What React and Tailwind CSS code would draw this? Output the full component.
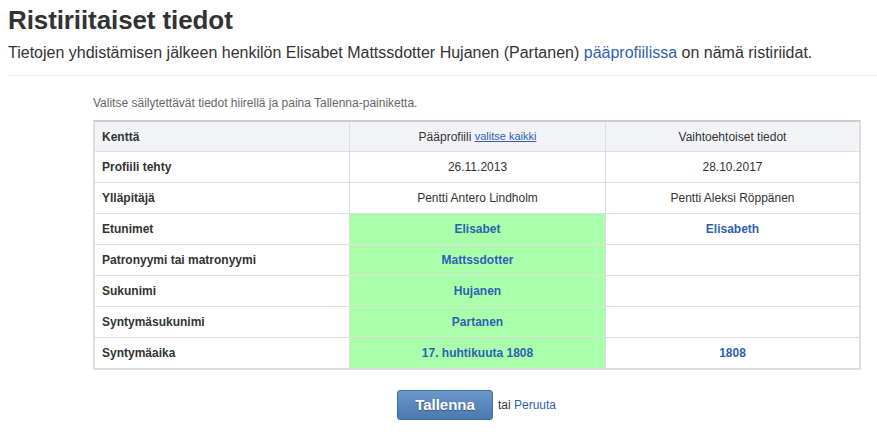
import React from "react";

const rows = [
  { label: "Profiili tehty", a: "26.11.2013", b: "28.10.2017" },
  { label: "Ylläpitäjä", a: "Pentti Antero Lindholm", b: "Pentti Aleksi Röppänen" },
  { label: "Etunimet", a: "Elisabet", b: "Elisabeth", hl: true },
  { label: "Patronyymi tai matronyymi", a: "Mattssdotter", b: "", hl: true },
  { label: "Sukunimi", a: "Hujanen", b: "", hl: true },
  { label: "Syntymäsukunimi", a: "Partanen", b: "", hl: true },
  { label: "Syntymäaika", a: "17. huhtikuuta 1808", b: "1808", hl: true },
];

export default function App() {
  return (
    <div
      className="w-[877px] h-[435px] bg-white text-[#333] overflow-hidden"
      style={{ fontFamily: '"Liberation Sans", Arial, sans-serif' }}
    >
      <div className="pl-2 pt-[5px]">
        <h1 className="text-[26px] leading-[30px] font-bold tracking-[-0.1px] text-[#333]">Ristiriitaiset tiedot</h1>
        <p className="mt-[8px] text-[16px] leading-[20px] text-[#333]">
          Tietojen yhdistämisen jälkeen henkilön Elisabet Mattssdotter Hujanen (Partanen){" "}
          <span className="text-[#2f5fb3]">pääprofiilissa</span> on nämä ristiriidat.
        </p>
        <div className="mt-[12px] h-px bg-[#eeeeee]" />
      </div>

      <div className="ml-[93px] mt-[19px] w-[768px]">
        <p className="text-[12px] leading-[16px] text-[#666]">
          Valitse säilytettävät tiedot hiirellä ja paina Tallenna-painiketta.
        </p>
        <div className="mt-[9px] border-2 border-[#dddddd] border-t-[#cccccc] text-[12px]">
          <div className="grid grid-cols-[254px_256px_254px] h-[29px] bg-[#f2f3f7]">
            <div className="flex items-center pl-[7px] font-bold">Kenttä</div>
            <div className="flex items-center justify-center border-l border-[#dddddd]">
              Pääprofiili&nbsp;<span className="text-[11px] text-[#2f5fb3] underline">valitse kaikki</span>
            </div>
            <div className="flex items-center justify-center border-l border-[#dddddd]">
              Vaihtoehtoiset tiedot
            </div>
          </div>
          {rows.map((r) => (
            <div
              key={r.label}
              className="grid grid-cols-[254px_256px_254px] h-[31px] border-t border-[#dddddd]"
            >
              <div className="flex items-center pl-[7px] font-bold">{r.label}</div>
              <div
                className={
                  r.hl
                    ? "flex items-center justify-center border-l border-[#dddddd] bg-[#aaffaa] font-bold text-[#2f5fb3]"
                    : "flex items-center justify-center border-l border-[#dddddd]"
                }
              >
                {r.a}
              </div>
              <div
                className={
                  r.hl
                    ? "flex items-center justify-center border-l border-[#dddddd] font-bold text-[#2f5fb3]"
                    : "flex items-center justify-center border-l border-[#dddddd]"
                }
              >
                {r.b}
              </div>
            </div>
          ))}
        </div>
      </div>

      <div className="flex items-center mt-[20px] ml-[397px]">
        <button className="w-[96px] h-[30px] rounded-[3px] border border-[#3f6b9e] bg-gradient-to-b from-[#6b98cb] to-[#4b78ad] text-white font-bold text-[15px] [text-shadow:0_1px_1px_rgba(0,0,0,0.35)]">
          Tallenna
        </button>
        <span className="ml-[5px] text-[12px] text-[#333]">
          tai <span className="text-[#2f5fb3]">Peruuta</span>
        </span>
      </div>
    </div>
  );
}
